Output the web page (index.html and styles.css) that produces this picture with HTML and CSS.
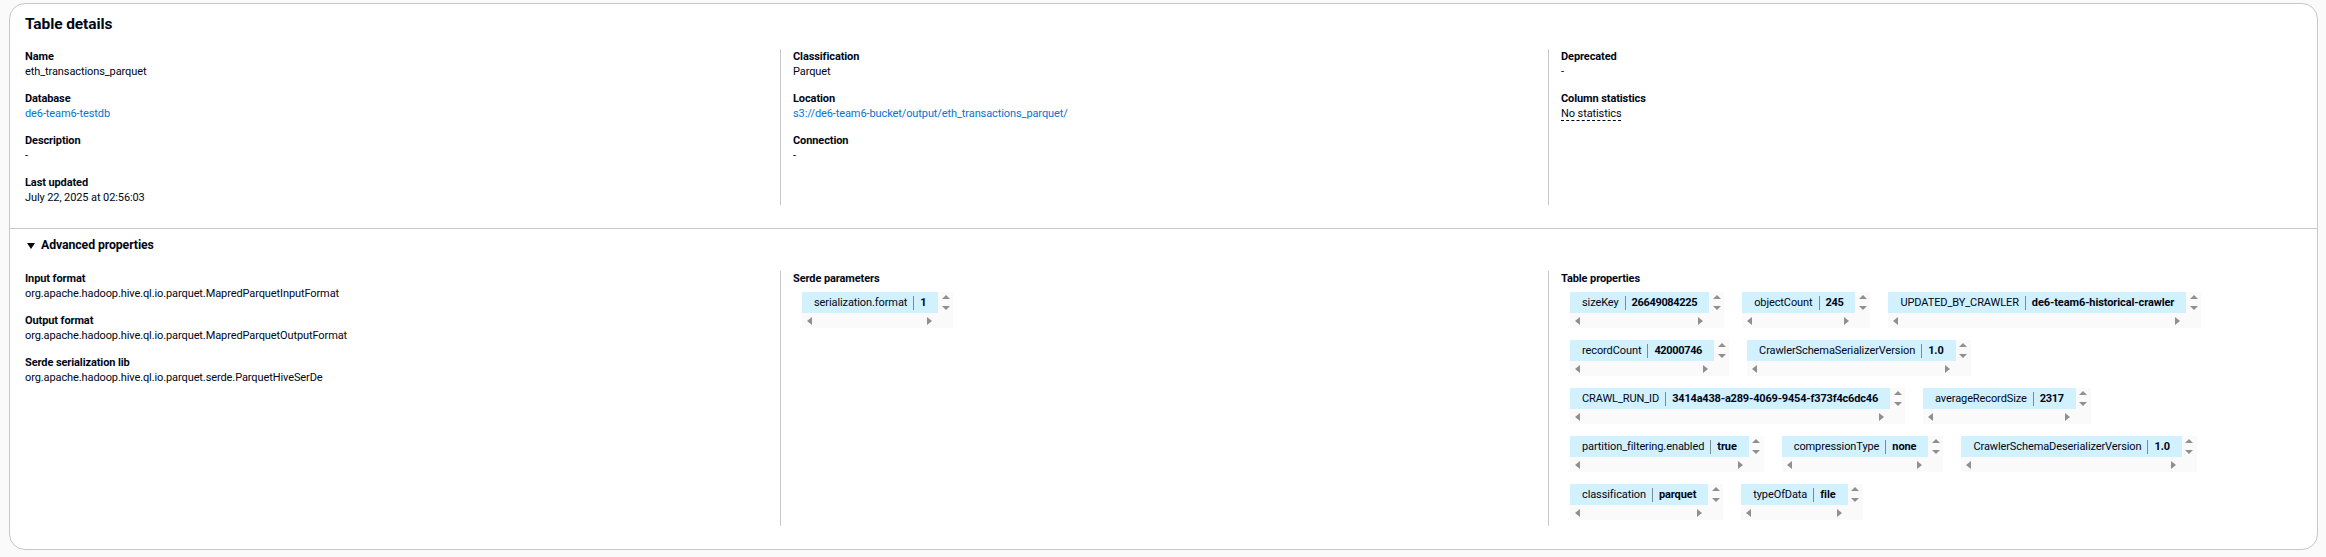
FILE: index.html
```html
<!DOCTYPE html>
<html lang="en">
<head>
    <meta charset="UTF-8">
    <title>Table details</title>
    <link rel="stylesheet" href="styles.css">
</head>
<body>
<div class="card">
    <h2 class="title">Table details</h2>
    <div class="cols cols-top">
        <div class="col">
            <div class="item"><div class="label">Name</div><div class="value">eth_transactions_parquet</div></div>
            <div class="item"><div class="label">Database</div><div class="value"><a href="#">de6-team6-testdb</a></div></div>
            <div class="item"><div class="label">Description</div><div class="value">-</div></div>
            <div class="item"><div class="label">Last updated</div><div class="value">July 22, 2025 at 02:56:03</div></div>
        </div>
        <div class="col">
            <div class="item"><div class="label">Classification</div><div class="value">Parquet</div></div>
            <div class="item"><div class="label">Location</div><div class="value"><a href="#">s3://de6-team6-bucket/output/eth_transactions_parquet/</a></div></div>
            <div class="item"><div class="label">Connection</div><div class="value">-</div></div>
        </div>
        <div class="col">
            <div class="item"><div class="label">Deprecated</div><div class="value">-</div></div>
            <div class="item"><div class="label">Column statistics</div><div class="value"><span class="dashed">No statistics</span></div></div>
        </div>
    </div>
    <div class="advanced">
        <div class="adv-head"><span class="caret"></span>Advanced properties</div>
        <div class="cols cols-bottom">
            <div class="col">
                <div class="item"><div class="label">Input format</div><div class="value">org.apache.hadoop.hive.ql.io.parquet.MapredParquetInputFormat</div></div>
                <div class="item"><div class="label">Output format</div><div class="value">org.apache.hadoop.hive.ql.io.parquet.MapredParquetOutputFormat</div></div>
                <div class="item"><div class="label">Serde serialization lib</div><div class="value">org.apache.hadoop.hive.ql.io.parquet.serde.ParquetHiveSerDe</div></div>
            </div>
            <div class="col">
                <div class="label">Serde parameters</div>
                <div class="tags">
                    <div class="tag"><div class="tag-body"><span class="key">serialization.format</span><span class="val">1</span></div><div class="vbar"><i class="up"></i><i class="down"></i></div><div class="hbar"><i class="left"></i><i class="right"></i></div></div>
                </div>
            </div>
            <div class="col">
                <div class="label">Table properties</div>
                <div class="tags">
                    <div class="tag"><div class="tag-body"><span class="key">sizeKey</span><span class="val num">26649084225</span></div><div class="vbar"><i class="up"></i><i class="down"></i></div><div class="hbar"><i class="left"></i><i class="right"></i></div></div>
                    <div class="tag"><div class="tag-body"><span class="key">objectCount</span><span class="val num">245</span></div><div class="vbar"><i class="up"></i><i class="down"></i></div><div class="hbar"><i class="left"></i><i class="right"></i></div></div>
                    <div class="tag"><div class="tag-body"><span class="key">UPDATED_BY_CRAWLER</span><span class="val">de6-team6-historical-crawler</span></div><div class="vbar"><i class="up"></i><i class="down"></i></div><div class="hbar"><i class="left"></i><i class="right"></i></div></div>
                    <div class="tag"><div class="tag-body"><span class="key">recordCount</span><span class="val num">42000746</span></div><div class="vbar"><i class="up"></i><i class="down"></i></div><div class="hbar"><i class="left"></i><i class="right"></i></div></div>
                    <div class="tag"><div class="tag-body"><span class="key">CrawlerSchemaSerializerVersion</span><span class="val">1.0</span></div><div class="vbar"><i class="up"></i><i class="down"></i></div><div class="hbar"><i class="left"></i><i class="right"></i></div></div>
                    <div class="tag"><div class="tag-body"><span class="key">CRAWL_RUN_ID</span><span class="val run-id">3414a438-a289-4069-9454-f373f4c6dc46</span></div><div class="vbar"><i class="up"></i><i class="down"></i></div><div class="hbar"><i class="left"></i><i class="right"></i></div></div>
                    <div class="tag"><div class="tag-body"><span class="key">averageRecordSize</span><span class="val num">2317</span></div><div class="vbar"><i class="up"></i><i class="down"></i></div><div class="hbar"><i class="left"></i><i class="right"></i></div></div>
                    <div class="tag"><div class="tag-body"><span class="key">partition_filtering.enabled</span><span class="val">true</span></div><div class="vbar"><i class="up"></i><i class="down"></i></div><div class="hbar"><i class="left"></i><i class="right"></i></div></div>
                    <div class="tag"><div class="tag-body"><span class="key">compressionType</span><span class="val">none</span></div><div class="vbar"><i class="up"></i><i class="down"></i></div><div class="hbar"><i class="left"></i><i class="right"></i></div></div>
                    <div class="tag"><div class="tag-body"><span class="key">CrawlerSchemaDeserializerVersion</span><span class="val">1.0</span></div><div class="vbar"><i class="up"></i><i class="down"></i></div><div class="hbar"><i class="left"></i><i class="right"></i></div></div>
                    <div class="tag"><div class="tag-body"><span class="key">classification</span><span class="val">parquet</span></div><div class="vbar"><i class="up"></i><i class="down"></i></div><div class="hbar"><i class="left"></i><i class="right"></i></div></div>
                    <div class="tag"><div class="tag-body"><span class="key">typeOfData</span><span class="val">file</span></div><div class="vbar"><i class="up"></i><i class="down"></i></div><div class="hbar"><i class="left"></i><i class="right"></i></div></div>
                </div>
            </div>
        </div>
    </div>
</div>
</body>
</html>
```

FILE: styles.css
```css
* {
    box-sizing: border-box;
    margin: 0;
    padding: 0;
}

body {
    background: #fafafa;
    padding: 3px 8px 8px 9px;
    font-family: "Roboto", "Liberation Sans", sans-serif;
    font-size: 11px;
    letter-spacing: -0.1px;
    line-height: 15px;
    color: #000716;
}

a {
    color: #0972d3;
    text-decoration: none;
}

.card {
    background: #fff;
    border: 1px solid #c6c6cd;
    border-radius: 16px;
    height: 547px;
}

.title {
    font-size: 15.5px;
    line-height: 20px;
    font-weight: 700;
    padding: 10px 0 15px 15px;
}

.cols {
    display: grid;
    grid-template-columns: 770px 768px 1fr;
}

.col {
    padding-left: 12px;
    border-left: 1px solid #c6c6cd;
}

.col:first-child {
    padding-left: 15px;
    border-left: 0;
}

.item + .item {
    margin-top: 12px;
}

.label {
    font-weight: 700;
}

.dashed {
    border-bottom: 1px dashed #000716;
}

.advanced {
    margin-top: 23px;
    border-top: 1px solid #c6c6cd;
}

.adv-head {
    display: flex;
    align-items: center;
    padding: 8px 0 17px 17px;
    font-size: 12.3px;
    line-height: 17px;
    font-weight: 700;
}

.caret {
    width: 0;
    height: 0;
    margin-right: 6px;
    border-left: 4px solid transparent;
    border-right: 4px solid transparent;
    border-top: 6px solid #000716;
}

.tags {
    display: flex;
    flex-wrap: wrap;
    gap: 12px 18px;
    margin: 6px 24px 6px 9px;
}

.tag {
    display: grid;
    grid-template-columns: auto 15px;
    grid-template-rows: 21px 15px;
    background: #fafafa;
}

.tag-body {
    display: flex;
    align-items: center;
    padding: 0 12px;
    background: #d1f1ff;
    white-space: nowrap;
}

.key {
    padding-right: 6px;
    border-right: 1px solid #7d8998;
    line-height: 14px;
}

.val {
    padding-left: 6px;
    font-weight: 700;
}

.num {
    letter-spacing: -0.35px;
}

.run-id {
    letter-spacing: -0.18px;
}

.vbar {
    display: flex;
    flex-direction: column;
    justify-content: space-between;
    align-items: center;
    padding: 3px 0;
}

.hbar {
    display: flex;
    justify-content: space-between;
    align-items: center;
    padding: 0 6px 0 5px;
}

.vbar i,
.hbar i {
    width: 0;
    height: 0;
}

.up {
    border-left: 4px solid transparent;
    border-right: 4px solid transparent;
    border-bottom: 4px solid #8f8f8f;
}

.down {
    border-left: 4px solid transparent;
    border-right: 4px solid transparent;
    border-top: 4px solid #8f8f8f;
}

.left {
    border-top: 4px solid transparent;
    border-bottom: 4px solid transparent;
    border-right: 5px solid #8f8f8f;
}

.right {
    border-top: 4px solid transparent;
    border-bottom: 4px solid transparent;
    border-left: 5px solid #8f8f8f;
}
```
